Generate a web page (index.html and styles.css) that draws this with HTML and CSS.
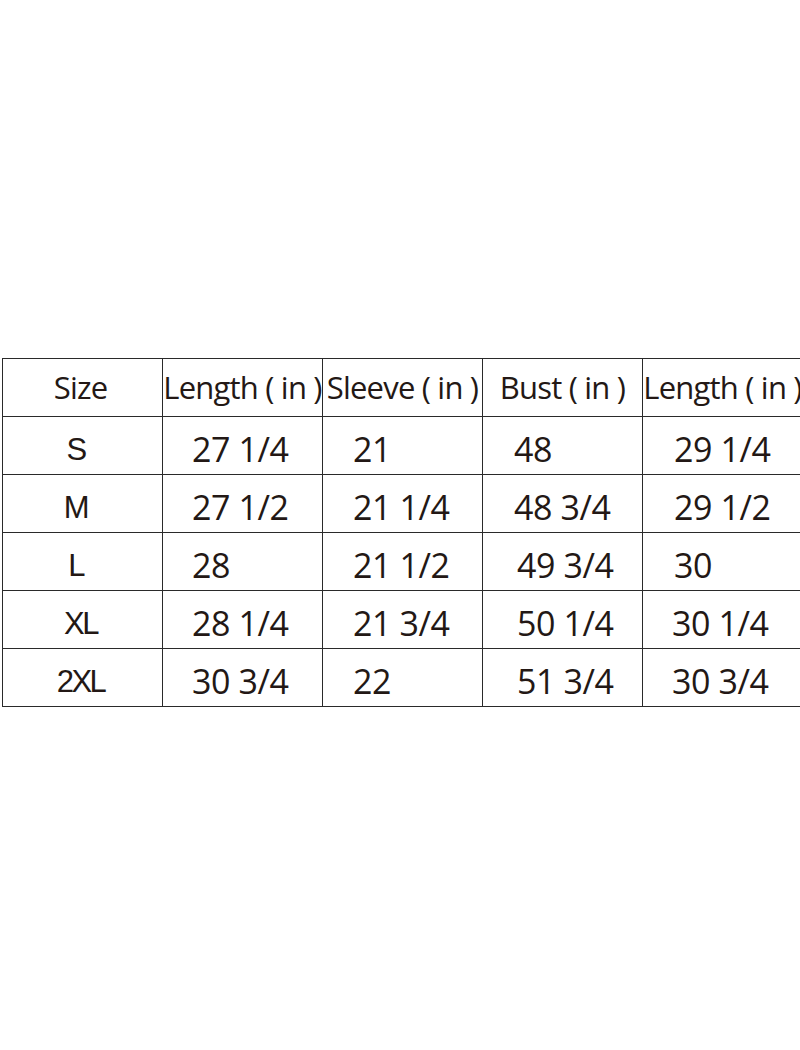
FILE: index.html
```html
<!DOCTYPE html>
<html>
<head>
<meta charset="utf-8">
<link rel="stylesheet" href="styles.css">
</head>
<body>
<div class="chart">
  <div class="cell head first">Size</div>
  <div class="cell head">Length ( in )</div>
  <div class="cell head">Sleeve ( in )</div>
  <div class="cell head">Bust ( in )</div>
  <div class="cell head">Length ( in )</div>

  <div class="cell size">S</div>
  <div class="cell c2">27 1/4</div>
  <div class="cell c3">21</div>
  <div class="cell c4">48</div>
  <div class="cell c5">29 1/4</div>

  <div class="cell size">M</div>
  <div class="cell c2">27 1/2</div>
  <div class="cell c3">21 1/4</div>
  <div class="cell c4">48 3/4</div>
  <div class="cell c5">29 1/2</div>

  <div class="cell size">L</div>
  <div class="cell c2">28</div>
  <div class="cell c3">21 1/2</div>
  <div class="cell c4 shift">49 3/4</div>
  <div class="cell c5">30</div>

  <div class="cell size wide">XL</div>
  <div class="cell c2">28 1/4</div>
  <div class="cell c3">21 3/4</div>
  <div class="cell c4 shift">50 1/4</div>
  <div class="cell c5 back">30 1/4</div>

  <div class="cell size wide">2XL</div>
  <div class="cell c2">30 3/4</div>
  <div class="cell c3">22</div>
  <div class="cell c4 shift">51 3/4</div>
  <div class="cell c5 back">30 3/4</div>
</div>
</body>
</html>
```

FILE: styles.css
```css
html, body {
  margin: 0;
  padding: 0;
  background: #ffffff;
  overflow: hidden;
}

body {
  font-family: "Open Sans", "Noto Sans", sans-serif;
  color: #231815;
}

.chart {
  margin-top: 358px;
  margin-left: 2px;
  display: grid;
  grid-template-columns: 160px 160px 160px 160px 160px;
  grid-template-rows: repeat(6, 58px);
  border-top: 1px solid #2a2a2a;
  border-left: 1px solid #2a2a2a;
  width: 801px;
}

.cell {
  border-right: 1px solid #2a2a2a;
  border-bottom: 1px solid #2a2a2a;
  display: flex;
  align-items: center;
  white-space: nowrap;
  overflow: visible;
  font-size: 34px;
  letter-spacing: -0.4px;
}

.head {
  justify-content: center;
  font-size: 31px;
  letter-spacing: -0.8px;
  padding-bottom: 2px;
}

.head.first {
  padding-right: 4px;
}

.size {
  justify-content: center;
  font-family: "Liberation Sans", Arial, sans-serif;
  font-size: 31px;
  letter-spacing: -2.5px;
  padding-top: 8px;
  padding-right: 14px;
}

.size.wide {
  padding-right: 4px;
}

.c2 { padding-left: 29px; padding-top: 6px; }
.c3 { padding-left: 30px; padding-top: 6px; }
.c4 { padding-left: 31px; padding-top: 6px; }
.c5 { padding-left: 31px; padding-top: 6px; }
.c4.shift { padding-left: 34px; }
.c5.back { padding-left: 29px; }
```
